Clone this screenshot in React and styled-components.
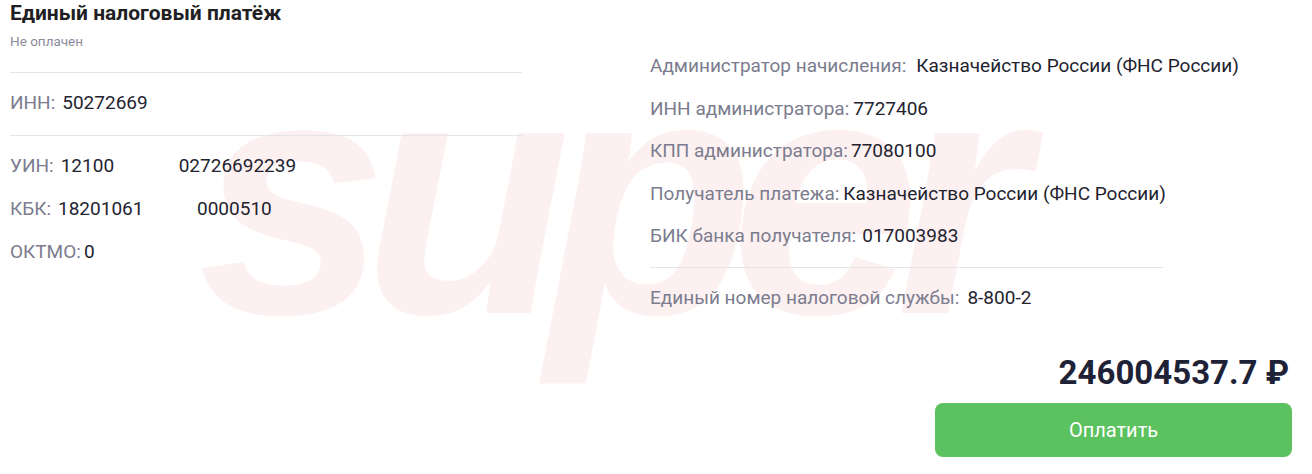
import React from 'react';
import styled, { createGlobalStyle } from 'styled-components';

const GlobalStyle = createGlobalStyle`
  body {
    margin: 0;
    background: #ffffff;
    font-family: Roboto, "Liberation Sans", Arial, sans-serif;
    color: #23232f;
  }
`;

const Page = styled.div`
  position: relative;
  width: 1312px;
  height: 474px;
  overflow: hidden;
  box-sizing: border-box;
  padding-left: 10px;
`;

const Watermark = styled.span`
  position: absolute;
  left: 198px;
  top: 25px;
  z-index: 0;
  font-family: "Liberation Sans", Arial, sans-serif;
  font-weight: 700;
  font-style: italic;
  font-size: 340px;
  line-height: 1;
  letter-spacing: -24px;
  color: #fdf0f1;
  user-select: none;
  pointer-events: none;
`;

const Columns = styled.div`
  position: relative;
  z-index: 1;
  display: grid;
  grid-template-columns: 512px 513px;
  column-gap: 128px;
  align-items: start;
`;

const Column = styled.div`
  display: flex;
  flex-direction: column;
  padding-top: ${(p) => p.$top || 0}px;
`;

const Title = styled.h1`
  margin: 0;
  font-size: 21px;
  line-height: 26px;
  font-weight: 700;
  color: #1f1f24;
`;

const Status = styled.div`
  margin-top: 7px;
  font-size: 13.5px;
  line-height: 16px;
  color: #8b8c9c;
`;

const Divider = styled.hr`
  margin: ${(p) => p.$before}px 0 0;
  border: 0;
  border-top: 1px solid #e4e5ea;
  height: 0;
`;

const Rows = styled.div`
  display: flex;
  flex-direction: column;
  gap: ${(p) => p.$gap}px;
  margin-top: ${(p) => p.$top}px;
`;

const Row = styled.div`
  display: flex;
  align-items: baseline;
  font-size: 19px;
  line-height: 24px;
  white-space: nowrap;
`;

const Label = styled.span`
  color: #7b7c8e;
`;

const Value = styled.span`
  color: #23232f;
  margin-left: ${(p) => p.$gap ?? 4}px;
  min-width: ${(p) => (p.$w ? `${p.$w}px` : 'auto')};
`;

const Footer = styled.div`
  position: relative;
  z-index: 1;
  display: flex;
  flex-direction: column;
  align-items: flex-end;
  padding-right: 20px;
  margin-top: 43px;
`;

const Amount = styled.div`
  font-size: 33px;
  line-height: 40px;
  font-weight: 700;
  color: #1e2236;
  padding-right: 3px;
`;

const PayButton = styled.button`
  margin-top: 10px;
  width: 357px;
  height: 54px;
  border: 0;
  border-radius: 8px;
  background: #5bc25f;
  color: #ffffff;
  font-family: Roboto, "Liberation Sans", Arial, sans-serif;
  font-size: 20px;
  font-weight: 400;
  cursor: pointer;
`;

const App = () => {
  return (
    <Page>
      <GlobalStyle />
      <Watermark aria-hidden="true">super</Watermark>
      <Columns>
        <Column>
          <Title>Единый налоговый платёж</Title>
          <Status>Не оплачен</Status>
          <Divider $before={23} />
          <Rows $gap={0} $top={18}>
            <Row>
              <Label>ИНН:</Label>
              <Value $gap={7}>50272669</Value>
            </Row>
          </Rows>
          <Divider $before={20} />
          <Rows $gap={19} $top={18}>
            <Row>
              <Label>УИН:</Label>
              <Value $gap={7} $w={118}>12100</Value>
              <Value $gap={0}>02726692239</Value>
            </Row>
            <Row>
              <Label>КБК:</Label>
              <Value $gap={7} $w={139}>18201061</Value>
              <Value $gap={0}>0000510</Value>
            </Row>
            <Row>
              <Label>ОКТМО:</Label>
              <Value $gap={3}>0</Value>
            </Row>
          </Rows>
        </Column>

        <Column $top={54}>
          <Rows $gap={18.5} $top={0}>
            <Row>
              <Label>Администратор начисления:</Label>
              <Value $gap={10}>Казначейство России (ФНС России)</Value>
            </Row>
            <Row>
              <Label>ИНН администратора:</Label>
              <Value $gap={4}>7727406</Value>
            </Row>
            <Row>
              <Label>КПП администратора:</Label>
              <Value $gap={3}>77080100</Value>
            </Row>
            <Row>
              <Label>Получатель платежа:</Label>
              <Value $gap={4}>Казначейство России (ФНС России)</Value>
            </Row>
            <Row>
              <Label>БИК банка получателя:</Label>
              <Value $gap={6}>017003983</Value>
            </Row>
          </Rows>
          <Divider $before={19} />
          <Rows $gap={0} $top={18}>
            <Row>
              <Label>Единый номер налоговой службы:</Label>
              <Value $gap={8}>8-800-2</Value>
            </Row>
          </Rows>
        </Column>
      </Columns>

      <Footer>
        <Amount>246004537.7 ₽</Amount>
        <PayButton type="button">Оплатить</PayButton>
      </Footer>
    </Page>
  );
};

export default App;
